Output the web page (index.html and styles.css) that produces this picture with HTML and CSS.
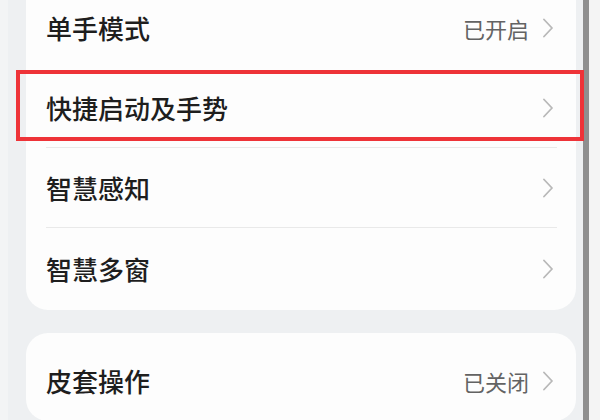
FILE: index.html
```html
<!DOCTYPE html>
<html lang="zh-CN">
<head>
<meta charset="utf-8">
<link rel="stylesheet" href="styles.css">
</head>
<body>
<div class="page">
  <main class="content">
    <section class="card card-first">
      <div class="row no-line">
        <span class="title">单手模式</span>
        <span class="trail"><span class="value">已开启</span><svg class="chev" viewBox="0 0 10 20"><path d="M1 1.5 L9 10 L1 18.5"/></svg></span>
      </div>
      <div class="row highlighted">
        <span class="title">快捷启动及手势</span>
        <span class="trail"><svg class="chev" viewBox="0 0 10 20"><path d="M1 1.5 L9 10 L1 18.5"/></svg></span>
        <span class="mark"></span>
      </div>
      <div class="row">
        <span class="title">智慧感知</span>
        <span class="trail"><svg class="chev" viewBox="0 0 10 20"><path d="M1 1.5 L9 10 L1 18.5"/></svg></span>
      </div>
      <div class="row last">
        <span class="title">智慧多窗</span>
        <span class="trail"><svg class="chev" viewBox="0 0 10 20"><path d="M1 1.5 L9 10 L1 18.5"/></svg></span>
      </div>
    </section>
    <section class="card">
      <div class="row">
        <span class="title">皮套操作</span>
        <span class="trail"><span class="value">已关闭</span><svg class="chev" viewBox="0 0 10 20"><path d="M1 1.5 L9 10 L1 18.5"/></svg></span>
      </div>
    </section>
  </main>
  <div class="rail"></div>
  <div class="edge"></div>
</div>
</body>
</html>
```
FILE: styles.css
```css
html, body {
  margin: 0;
  padding: 0;
}
body {
  background: #eef0f2;
  font-family: "Noto Sans CJK SC", "Noto Sans", sans-serif;
  overflow: hidden;
}
.page {
  display: flex;
  height: 420px;
  overflow: hidden;
}
.content {
  flex: 1;
  padding: 0 7px 0 26px;
  display: flex;
  flex-direction: column;
  gap: 23px;
  background: linear-gradient(to right, #f3f4f5 0, #f3f4f5 8px, #eef0f2 8px);
}
.rail {
  width: 6px;
  background: #8f8f8f;
}
.edge {
  width: 11px;
  background: #f4f4f4;
}
.card {
  background: #fdfdfd;
  border-radius: 22px;
  padding: 8px 0 0;
}
.card-first {
  margin-top: -20px;
}
.row {
  position: relative;
  margin: 0 19px 0 20px;
  height: 79px;
  border-bottom: 1px solid #e9e9e9;
  display: flex;
  align-items: center;
  justify-content: space-between;
}
.row.no-line {
  border-bottom-color: transparent;
}
.row.last {
  border-bottom: none;
  height: 82px;
}
.title {
  font-size: 26px;
  font-weight: 500;
  color: #1e1e1e;
  line-height: 1;
}
.trail {
  display: flex;
  align-items: center;
  gap: 14px;
  padding-right: 4px;
}
.value {
  font-size: 22px;
  color: #636363;
  line-height: 1;
}
.chev {
  width: 10px;
  height: 20px;
  fill: none;
  stroke: #b8b8b8;
  stroke-width: 1.8;
  stroke-linecap: round;
  stroke-linejoin: round;
}
.mark {
  position: absolute;
  left: -30px;
  right: -27px;
  top: 2px;
  bottom: 6px;
  border: 4px solid #ee3338;
  pointer-events: none;
}
```
